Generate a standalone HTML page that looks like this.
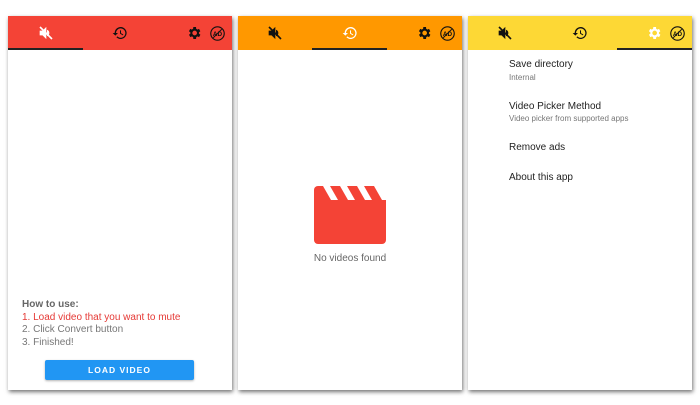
<!DOCTYPE html>
<html><head><meta charset="utf-8"><style>
body{margin:0;width:700px;height:405px;background:#fff;position:relative;font-family:"Liberation Sans",Roboto,sans-serif;overflow:hidden}
.p{position:absolute;top:16px;width:224px;height:374px;background:#fff;box-shadow:1px 2px 4px rgba(0,0,0,.55)}
.h{position:absolute;left:0;top:0;width:100%;height:34px}
.ind{position:absolute;bottom:0;height:2px;width:75px;background:#222}
.ic{position:absolute;top:9px}
.t{position:absolute;font-size:12px;color:#222}
.s{position:absolute;font-size:9px;color:#777}
</style></head><body>
<svg width="0" height="0" style="position:absolute">
<defs>
<g id="mute"><path d="M3 9v6h4l5 5V4L7 9H3z M16.5 12c0-1.8-1-3.3-2.5-4v8c1.5-.7 2.5-2.2 2.5-4z" /><path d="M3 3l18 18" stroke-width="2.4" fill="none"/></g>
<g id="hist"><path d="M13 3a9 9 0 0 0-9 9H1l4 4 4-4H6a7 7 0 1 1 2 5l-1.4 1.4A9 9 0 1 0 13 3zm-1 5v5l4.3 2.5.7-1.2-3.5-2.1V8H12z"/></g>
<g id="gear"><path d="M19.4 13a7.5 7.5 0 0 0 0-2l2.1-1.6-2-3.5-2.5 1a7 7 0 0 0-1.7-1L15 3h-4l-.4 2.9a7 7 0 0 0-1.7 1l-2.5-1-2 3.5L6.6 11a7.5 7.5 0 0 0 0 2l-2.1 1.6 2 3.5 2.5-1a7 7 0 0 0 1.7 1L11 21h4l.4-2.9a7 7 0 0 0 1.7-1l2.5 1 2-3.5L19.4 13zM13 15.5a3.5 3.5 0 1 1 0-7 3.5 3.5 0 0 1 0 7z"/></g>
<g id="ad"><circle cx="12" cy="12" r="9.5" fill="none" stroke-width="1.6"/><text x="12" y="15.5" font-size="9" font-weight="bold" text-anchor="middle" font-family="Liberation Sans" stroke="none">AD</text><path d="M6 18L18 6" stroke-width="1.4"/></g>
</defs></svg>

<!-- panel 1 -->
<div class="p" style="left:8px">
<div class="h" style="background:#f44336"><div class="ind" style="left:0"></div>
<svg class="ic" style="left:30px" width="16" height="16" viewBox="0 0 24 24" fill="#fff" stroke="#fff"><use href="#mute"/></svg>
<svg class="ic" style="left:104px" width="16" height="16" viewBox="0 0 24 24" fill="#111"><use href="#hist"/></svg>
<svg class="ic" style="left:178px" width="16" height="16" viewBox="0 0 24 24" fill="#111"><use href="#gear"/></svg>
<svg class="ic" style="left:201px" width="17" height="17" viewBox="0 0 24 24" fill="#111" stroke="#111"><use href="#ad"/></svg>
</div>
<div style="position:absolute;left:14px;top:283px;font-size:10px;line-height:12.5px;color:#777">
<div style="font-weight:bold;color:#666">How to use:</div>
<div style="color:#e53935">1. Load video that you want to mute</div>
<div>2. Click Convert button</div>
<div>3. Finished!</div></div>
<div style="position:absolute;left:37px;top:344px;width:149px;height:20px;background:#2196f3;border-radius:2px;color:#fff;font-size:8.5px;font-weight:bold;letter-spacing:1px;text-align:center;line-height:20px;box-shadow:0 1px 2px rgba(0,0,0,.3)">LOAD VIDEO</div>
</div>

<!-- panel 2 -->
<div class="p" style="left:238px">
<div class="h" style="background:#ff9800"><div class="ind" style="left:74px"></div>
<svg class="ic" style="left:29px" width="16" height="16" viewBox="0 0 24 24" fill="#111" stroke="#111"><use href="#mute"/></svg>
<svg class="ic" style="left:104px" width="16" height="16" viewBox="0 0 24 24" fill="#fff"><use href="#hist"/></svg>
<svg class="ic" style="left:178px" width="16" height="16" viewBox="0 0 24 24" fill="#111"><use href="#gear"/></svg>
<svg class="ic" style="left:201px" width="17" height="17" viewBox="0 0 24 24" fill="#111" stroke="#111"><use href="#ad"/></svg>
</div>
<svg style="position:absolute;left:76px;top:170px" width="72" height="58" viewBox="0 0 72 58">
<path d="M4 0h68v54a4 4 0 0 1-4 4H4a4 4 0 0 1-4-4V4a4 4 0 0 1 4-4z" fill="#f44336"/>
<path d="M9 0h7l8 14h-7zM26 0h7l8 14h-7zM43 0h7l8 14h-7zM60 0h12v14h-4z" fill="#fff"/>
</svg>
<div style="position:absolute;left:0;width:224px;top:237px;text-align:center;font-size:10px;color:#666">No videos found</div>
</div>

<!-- panel 3 -->
<div class="p" style="left:468px">
<div class="h" style="background:#fdd835"><div class="ind" style="left:149px"></div>
<svg class="ic" style="left:29px" width="16" height="16" viewBox="0 0 24 24" fill="#111" stroke="#111"><use href="#mute"/></svg>
<svg class="ic" style="left:104px" width="16" height="16" viewBox="0 0 24 24" fill="#111"><use href="#hist"/></svg>
<svg class="ic" style="left:178px" width="16" height="16" viewBox="0 0 24 24" fill="#fff"><use href="#gear"/></svg>
<svg class="ic" style="left:201px" width="17" height="17" viewBox="0 0 24 24" fill="#111" stroke="#111"><use href="#ad"/></svg>
</div>
<div class="t" style="left:41px;top:43px;font-size:10px">Save directory</div>
<div class="s" style="left:41px;top:57px;font-size:8px">Internal</div>
<div class="t" style="left:41px;top:85px;font-size:10px">Video Picker Method</div>
<div class="s" style="left:41px;top:98px;font-size:8px">Video picker from supported apps</div>
<div class="t" style="left:41px;top:126px;font-size:10px">Remove ads</div>
<div class="t" style="left:41px;top:156px;font-size:10px">About this app</div>
</div>
</body></html>
